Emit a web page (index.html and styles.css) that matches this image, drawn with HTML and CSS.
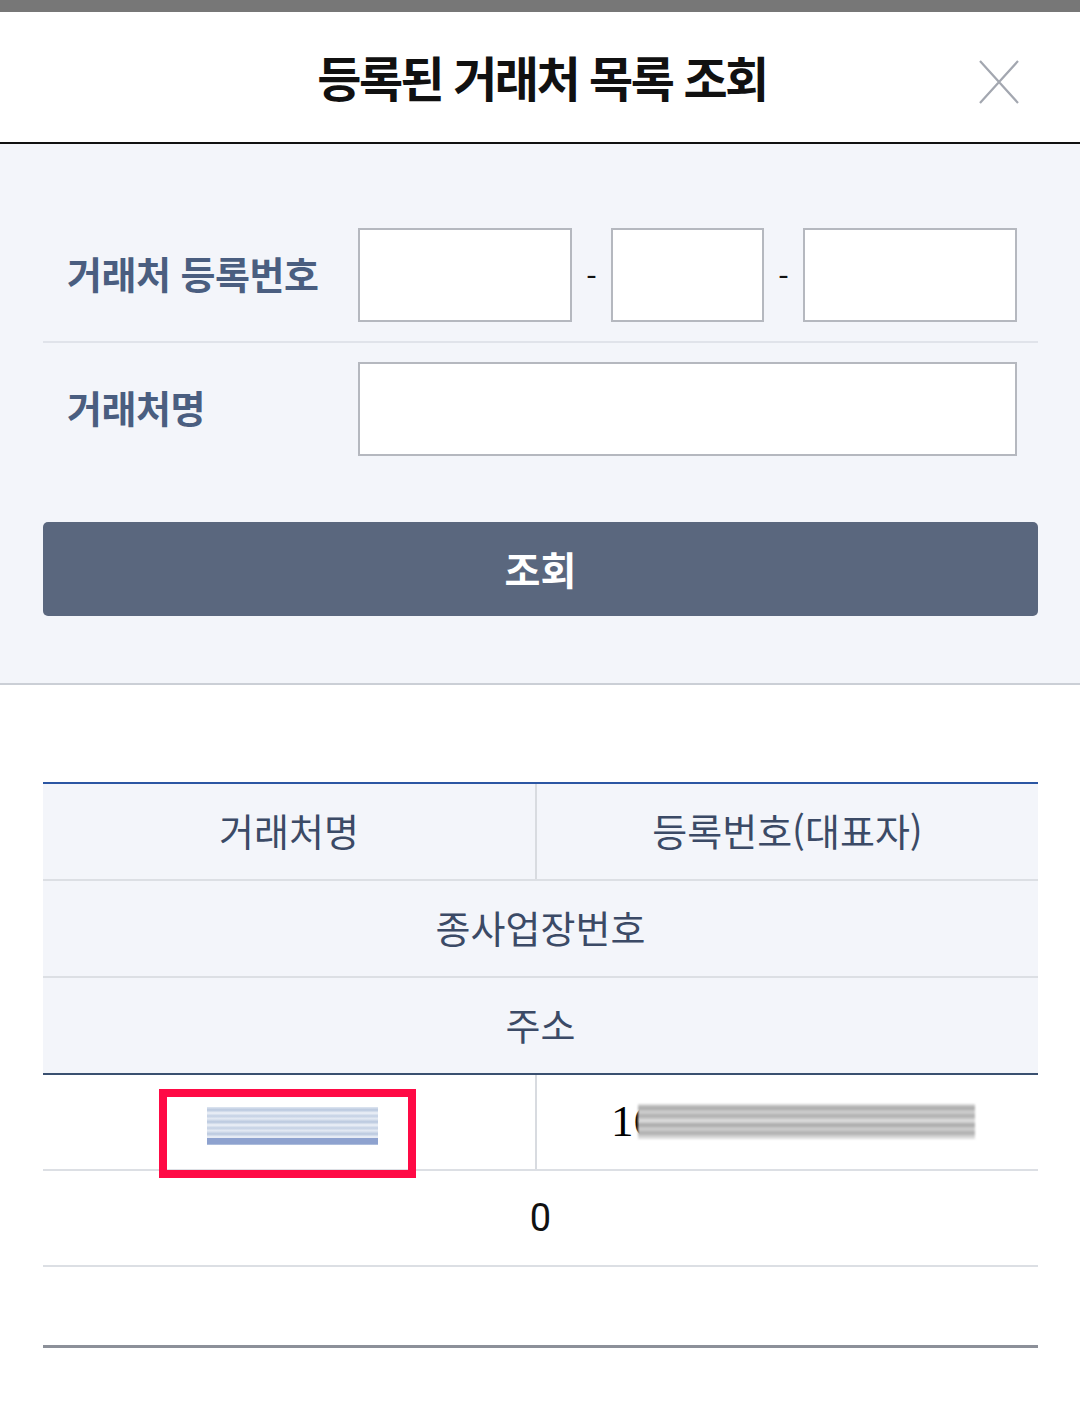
FILE: index.html
```html
<!DOCTYPE html>
<html lang="ko">
<head>
<meta charset="utf-8">
<title>등록된 거래처 목록 조회</title>
<link rel="stylesheet" href="styles.css">
</head>
<body>
<div class="topbar"></div>
<header class="header">
  <div></div>
  <h1 class="title">등록된 거래처 목록 조회</h1>
  <div class="close-wrap">
    <svg class="close" width="40" height="44" viewBox="0 0 40 44" aria-label="닫기">
      <path d="M1 1 L39 43 M39 1 L1 43" stroke="#a3a7b0" stroke-width="2.2" fill="none"/>
    </svg>
  </div>
</header>

<section class="search">
  <div class="row row-first">
    <div class="label">거래처 등록번호</div>
    <div class="fields">
      <div class="input w-lg"></div>
      <span class="dash">-</span>
      <div class="input w-sm"></div>
      <span class="dash">-</span>
      <div class="input w-lg"></div>
    </div>
  </div>
  <div class="row row-second">
    <div class="label">거래처명</div>
    <div class="fields">
      <div class="input w-full"></div>
    </div>
  </div>
  <button class="btn">조회</button>
</section>

<section class="table">
  <div class="thead">
    <div class="tr two">
      <div class="th split">거래처명</div>
      <div class="th">등록번호(대표자)</div>
    </div>
    <div class="tr">
      <div class="th">종사업장번호</div>
    </div>
    <div class="tr last">
      <div class="th">주소</div>
    </div>
  </div>
  <div class="tbody">
    <div class="tr two">
      <div class="td split cell-name">
        <div class="blur-blue"></div>
        <div class="highlight"></div>
      </div>
      <div class="td cell-num">
        <span class="num">16</span><span class="blur-gray"></span>
      </div>
    </div>
    <div class="tr">
      <div class="td">0</div>
    </div>
    <div class="tr empty">
      <div class="td"></div>
    </div>
  </div>
</section>
</body>
</html>
```

FILE: styles.css
```css
* { box-sizing: border-box; }
html, body { margin: 0; padding: 0; }
body {
  width: 1080px;
  background: #ffffff;
  font-family: "Noto Sans CJK KR", "Noto Sans", sans-serif;
}

.topbar {
  height: 12px;
  background: #777777;
}

.header {
  height: 132px;
  display: grid;
  grid-template-columns: 1fr auto 1fr;
  align-items: center;
  border-bottom: 2px solid #111111;
}
.title {
  margin: 0;
  font-size: 48px;
  font-weight: 700;
  letter-spacing: -2.5px;
  color: #111111;
  line-height: 1;
  padding-bottom: 2px;
  padding-left: 4px;
}
.close-wrap {
  display: flex;
  justify-content: flex-end;
  padding-right: 61px;
  padding-top: 10px;
}
.close { display: block; }

.search {
  background: #f3f5fa;
  padding: 65px 42px 67px 43px;
  border-bottom: 2px solid #cbcfd6;
}
.row {
  display: flex;
  align-items: center;
  padding: 0 21px 0 0;
}
.row-first {
  padding-top: 19px;
  padding-bottom: 19px;
  border-bottom: 2px solid #e0e3ea;
}
.row-second { padding-top: 19px; }
.label {
  width: 315px;
  padding-left: 24px;
  font-size: 38px;
  font-weight: 700;
  letter-spacing: -0.5px;
  color: #4a5e80;
  line-height: 1;
  padding-bottom: 4px;
}
.fields {
  display: flex;
  align-items: center;
}
.input {
  height: 94px;
  background: #ffffff;
  border: 2px solid #b5b8bf;
}
.w-lg { width: 214px; }
.w-sm { width: 153px; }
.w-full { width: 659px; }
.dash {
  width: 39px;
  text-align: center;
  font-size: 30px;
  color: #111;
  line-height: 1;
}

.btn {
  display: block;
  width: 100%;
  height: 94px;
  margin-top: 66px;
  border: 0;
  border-radius: 5px;
  background: #5a677e;
  color: #ffffff;
  font-family: "Noto Sans CJK KR", "Noto Sans", sans-serif;
  font-size: 39px;
  font-weight: 700;
  letter-spacing: 0;
  padding: 0 0 2px;
}

.table {
  margin: 97px 42px 0 43px;
  border-top: 2px solid #2b56a3;
  border-bottom: 3px solid #8c9099;
}
.tr {
  display: grid;
  grid-template-columns: 1fr;
  border-bottom: 2px solid #dcdfe4;
}
.tr.two { grid-template-columns: 494px 1fr; }
.thead .tr { background: #f3f5fa; }
.thead .tr.last { border-bottom: 2px solid #3a5070; }
.th, .td {
  height: 94px;
  display: flex;
  align-items: center;
  justify-content: center;
  font-size: 38px;
  line-height: 1;
}
.th { height: 95px; color: #3b4a66; padding-bottom: 4px; letter-spacing: 0; }
.split { border-right: 2px solid #d8dbe0; }
.td { color: #111111; font-family: "Roboto", "Noto Sans", sans-serif; }
.tbody .tr.empty { border-bottom: 0; }
.tbody .tr.empty .td { height: 78px; }

.cell-name { position: relative; }
.blur-blue {
  width: 171px;
  height: 38px;
  margin-left: 6px;
  margin-top: 8px;
  background:
    linear-gradient(to bottom,
      rgba(255,255,255,0) 0, rgba(255,255,255,0) 31px,
      #8ea2cf 31px, #8ea2cf 37px, rgba(255,255,255,0) 38px),
    repeating-linear-gradient(to bottom,
      #dfe6f1 0, #b8c7de 3px, #eef2f8 6px, #c3d0e4 9px, #e8edf5 12px);
  filter: blur(0.6px);
}
.highlight {
  position: absolute;
  left: 116px;
  top: 14px;
  width: 257px;
  height: 89px;
  border: 8px solid #ff0a45;
  z-index: 2;
}
.cell-num {
  justify-content: flex-start;
  padding-left: 74px;
}
.num {
  font-family: "Liberation Serif", serif;
  font-size: 45px;
  color: #000;
  margin-bottom: 2px;
}
.blur-gray {
  width: 337px;
  height: 35px;
  margin-left: -18px;
  margin-bottom: 2px;
  background: repeating-linear-gradient(to bottom,
      #e2e2e2 0, #a4a4a4 4px, #d4d4d4 8px, #ababab 12px, #e6e6e6 17px);
  filter: blur(1px);
}
```
